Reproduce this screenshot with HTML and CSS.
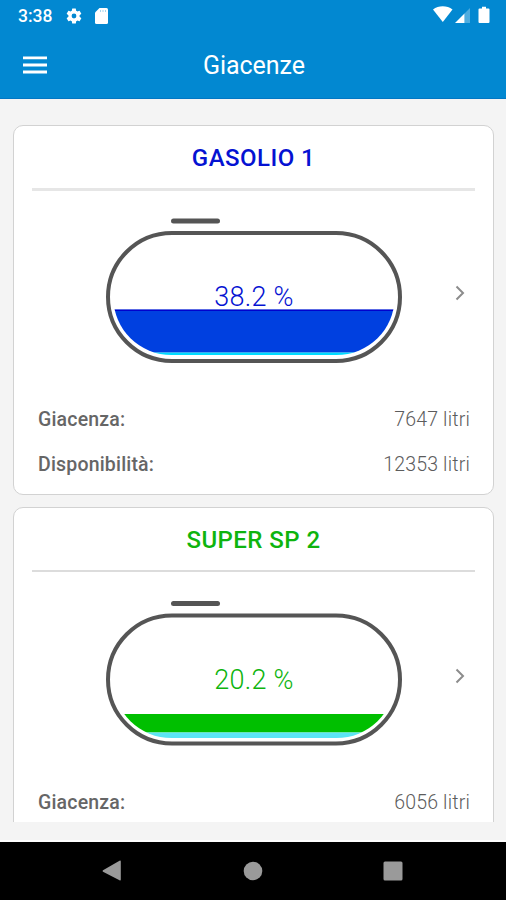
FILE: index.html
```html
<!DOCTYPE html>
<html lang="it">
<head>
<meta charset="utf-8">
<title>Giacenze</title>
<link rel="stylesheet" href="styles.css">
</head>
<body>
<div class="screen">
  <div class="statusbar">
    <span class="clock">3:38</span>
    <svg class="gear" width="18" height="18" viewBox="0 0 24 24"><path fill="#fff" d="M19.4 13c.04-.3.07-.65.07-1s-.03-.7-.07-1l2.1-1.65a.5.5 0 0 0 .12-.64l-2-3.46a.5.5 0 0 0-.6-.22l-2.5 1a7.300 7.300 0 0 0-1.700-.98l-.38-2.650A.5.5 0 0 0 14 2h-4a.5.5 0 0 0-.5.420L9.130 5.070c-.610.250-1.170.590-1.690.980l-2.490-1a.5.5 0 0 0-.610.220l-2 3.460a.5.5 0 0 0 .120.640L4.570 11a7.900 7.900 0 0 0 0 2l-2.110 1.650a.5.5 0 0 0-.120.640l2 3.460c.120.220.390.300.610.220l2.490-1c.520.400 1.080.730 1.690.980l.380 2.650c.030.240.240.400.490.400h4c.250 0 .460-.180.490-.420l.380-2.650c.610-.250 1.170-.590 1.690-.980l2.490 1c.230.090.490 0 .610-.220l2-3.460a.5.5 0 0 0-.120-.640zM12 15.200a3.200 3.200 0 1 1 0-6.400 3.200 3.200 0 0 1 0 6.400z"/></svg>
    <svg class="sdcard" width="13" height="16" viewBox="0 0 13 16"><path fill="#fff" d="M4.500 0h7a1.500 1.500 0 0 1 1.500 1.500v13a1.500 1.500 0 0 1-1.500 1.500h-10A1.500 1.500 0 0 1 0 14.500v-10z"/><path d="M5.500 2v2M8 2v2M10.500 2v2" stroke="#0288d1" opacity=".35"/></svg>
    <svg class="signals" width="57" height="18" viewBox="0 0 57 18"><path fill="#fff" d="M0 3.500C5.500-.8 14-.8 19.500 3.500L9.800 16z"/><path fill="#fff" d="M22 17 31.500 7.500V17z"/><path fill="#fff" opacity=".3" d="M31.500 7.500 37 2v15h-5.500z"/><path fill="#fff" d="M46.500 2.500H49V.8h4v1.700h2.500q1 0 1 1V16q0 1-1 1h-9q-1 0-1-1V3.500q0-1 1-1z"/></svg>
  </div>
  <header class="appbar">
    <svg class="menu" width="24" height="18" viewBox="0 0 24 18"><path d="M0 1.900h24M0 9h24M0 16h24" stroke="#fff" stroke-width="2.900"/></svg>
    <h1 class="heading">Giacenze</h1>
  </header>
  <main class="list">
    <section class="card">
      <h2 class="name blue">GASOLIO 1</h2>
      <div class="rule"></div>
      <div class="gauge">
        <svg width="298" height="148" viewBox="0 0 298 148">
          <defs><clipPath id="vessel"><rect x="8.500" y="26" width="281" height="114" rx="58"/></clipPath></defs>
          <rect x="66" y="3.500" width="49" height="5" rx="2.500" fill="#555"/>
          <rect x="3" y="18" width="292" height="128" rx="64" fill="none" stroke="#555" stroke-width="4"/>
          <g clip-path="url(#vessel)"><rect y="94.600" width="298" height="43" fill="#0040e0"/><rect y="94.600" width="298" height="1.400" fill="#0000cd"/><rect y="137.600" width="298" height="3" fill="#00dcff"/></g>
          <text class="percent blue-fill" x="149" y="91">38.2 %</text>
        </svg>
        <svg class="chevron" width="10" height="16" viewBox="0 0 10 16"><path d="M1.500 1.500 8 8l-6.500 6.500" fill="none" stroke="#8c8c8c" stroke-width="2"/></svg>
      </div>
      <dl class="facts">
        <div class="fact"><dt>Giacenza:</dt><dd>7647 litri</dd></div>
        <div class="fact"><dt>Disponibilità:</dt><dd>12353 litri</dd></div>
      </dl>
    </section>
    <section class="card">
      <h2 class="name green">SUPER SP 2</h2>
      <div class="rule thin"></div>
      <div class="gauge">
        <svg width="298" height="148" viewBox="0 0 298 148">
          <rect x="66" y="3" width="49" height="5" rx="2.500" fill="#555"/>
          <rect x="3" y="17.500" width="292" height="128" rx="64" fill="none" stroke="#555" stroke-width="4"/>
          <g clip-path="url(#vessel)"><rect y="116" width="298" height="18.500" fill="#00bf00"/><rect y="134.500" width="298" height="6" fill="#5ce5f5"/></g>
          <text class="percent green-fill" x="149" y="91">20.2 %</text>
        </svg>
        <svg class="chevron" width="10" height="16" viewBox="0 0 10 16"><path d="M1.500 1.500 8 8l-6.500 6.500" fill="none" stroke="#8c8c8c" stroke-width="2"/></svg>
      </div>
      <dl class="facts">
        <div class="fact"><dt>Giacenza:</dt><dd>6056 litri</dd></div>
      </dl>
    </section>
  </main>
  <nav class="navbar">
    <svg width="20" height="22" viewBox="0 0 20 22"><path fill="#9a9a9a" d="M1 10.200 17.500.700Q18.800 0 18.800 1.500v18q0 1.500-1.300.8L1 11.800q-1-.8 0-1.600z"/></svg>
    <svg width="20" height="20" viewBox="0 0 20 20"><circle cx="10" cy="10" r="9.300" fill="#9a9a9a"/></svg>
    <svg width="20" height="20" viewBox="0 0 20 20"><rect x=".5" y=".5" width="19" height="19" rx="1.500" fill="#9a9a9a"/></svg>
  </nav>
</div>
</body>
</html>
```
FILE: styles.css
```css
* { box-sizing: border-box; margin: 0; padding: 0; }
body { font-family: Roboto, "Liberation Sans", sans-serif; background: #f4f4f4; }
svg { display: block; flex: none; }
.screen { width: 506px; height: 900px; display: flex; flex-direction: column; overflow: hidden; }
.statusbar { height: 32px; flex: none; background: #0288d1; color: #fff; display: flex; align-items: center; padding: 0 16px 0 18px; }
.clock { font-size: 17.500px; font-weight: 500; width: 47px; line-height: 32px; }
.gear { margin-top: -1px; }
.sdcard { margin-left: 12px; margin-top: -1px; }
.signals { margin-left: auto; margin-top: -2px; }
.appbar { height: 67px; flex: none; background: #0288d1; border-bottom: 1px solid #0277c4; display: grid; grid-template-columns: 60px 1fr 60px; align-items: center; color: #fff; }
.menu { margin-left: 23px; margin-bottom: 1px; }
.heading { font-size: 25px; font-weight: 400; text-align: center; line-height: 30px; padding-top: 2px; margin-left: 2px; letter-spacing: -.05px; }
.list { height: 723px; flex: none; padding: 26px 12px 0 13px; overflow: hidden; }
.card { height: 370px; margin-bottom: 12px; background: #fff; border: 1.500px solid #d2d2d2; border-radius: 10px; padding: 0 18px; }
.name { height: 62px; padding-top: 16px; line-height: 32px; font-size: 24px; font-weight: 500; text-align: center; letter-spacing: .45px; }
.blue { color: #0512d2; }
.green { color: #0eb40e; }
.rule { height: 3px; background: #e6e6e6; }
.rule.thin { height: 2px; margin-bottom: 2px; background: #dcdcdc; }
.gauge { height: 173px; padding: 24px 10px 0 0; display: flex; justify-content: space-between; }
.gauge > svg:first-child { margin-left: 73px; }
.chevron { margin-top: 70px; }
.percent { font-size: 27px; font-weight: 300; text-anchor: middle; letter-spacing: .3px; }
.blue-fill { fill: #0512d2; }
.green-fill { fill: #0eb40e; }
.facts { padding: 34px 5px 0 6px; font-size: 19.500px; color: #666; }
.fact { display: flex; justify-content: space-between; line-height: 44.500px; }
dt { font-weight: 500; letter-spacing: .18px; }
dd { font-weight: 300; letter-spacing: .18px; color: #5c5c5c; }
.navbar { margin-top: 20px; height: 58px; flex: none; background: #000; box-shadow: 0 -2px 0 #fff; display: flex; align-items: center; justify-content: space-between; padding: 0 103px 0 102px; }
```
